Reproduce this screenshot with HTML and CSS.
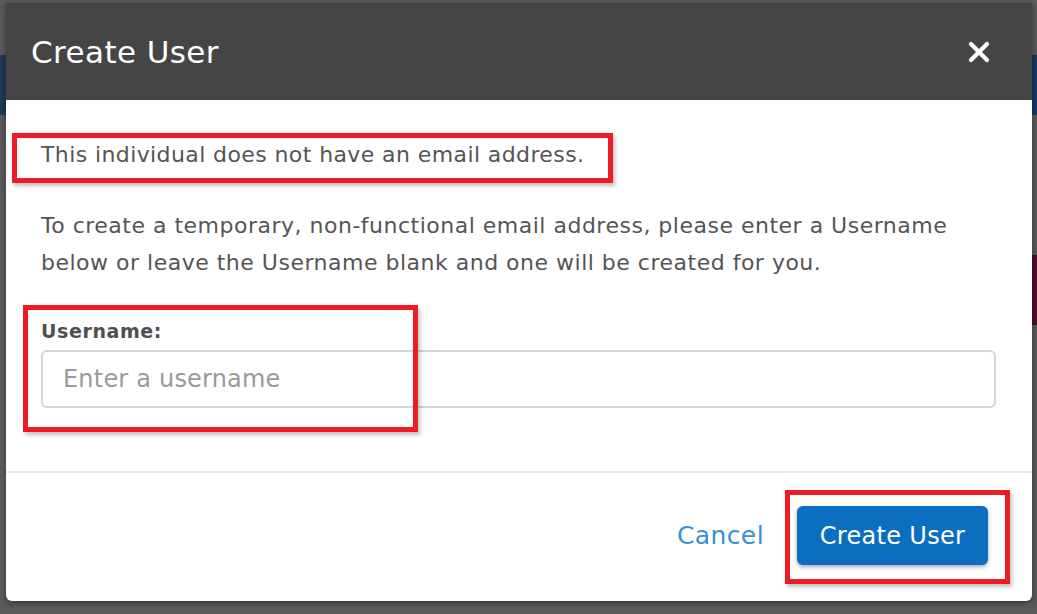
FILE: index.html
```html
<!DOCTYPE html>
<html lang="en">

<head>
  <meta charset="UTF-8">
  <meta name="viewport" content="width=device-width, initial-scale=1.0">
  <title>Create User</title>
  <link rel="stylesheet" href="styles.css">
</head>

<body>
  <!-- stukjes van de pagina achter de overlay -->
  <div class="behind">
    <div class="strip strip-left"></div>
    <div class="strip strip-right"></div>
    <div class="strip strip-wine"></div>
  </div>

  <div class="modal">
    <div class="modal-header">
      <h2 class="modal-title">Create User</h2>
      <button class="close" aria-label="Close">
        <svg width="22" height="22" viewBox="0 0 22 22">
          <path d="M3 3 L19 19 M19 3 L3 19" stroke="#fff" stroke-width="4.2" stroke-linecap="round" />
        </svg>
      </button>
    </div>

    <div class="modal-body">
      <p class="notice">This individual does not have an email address.</p>
      <p class="info">To create a temporary, non-functional email address, please enter a Username below or leave the Username blank and one will be created for you.</p>

      <div class="field">
        <label for="username">Username:</label>
        <input type="text" id="username" placeholder="Enter a username">
      </div>
    </div>

    <div class="modal-footer">
      <a href="#" class="cancel">Cancel</a>
      <button class="button-primary">Create User</button>
    </div>

    <!-- rode markeringen uit de handleiding -->
    <div class="mark mark-notice"></div>
    <div class="mark mark-field"></div>
    <div class="mark mark-submit"></div>
  </div>
</body>

</html>
```

FILE: styles.css
```css
/* Donkere overlay achter de popup */
body {
  margin: 0;
  padding: 3px 5px 13px 6px;
  background-color: #5a5a5a;
  font-family: "DejaVu Sans", Verdana, sans-serif;
  color: #555;
}

.behind {
  position: absolute;
  inset: 0;
  z-index: 0;
}

.strip {
  position: absolute;
  width: 8px;
}

.strip-left {
  left: 0;
  top: 55px;
  height: 60px;
  background-color: #1d3a5a;
}

.strip-right {
  right: 0;
  top: 55px;
  height: 60px;
  background-color: #143a62;
}

.strip-wine {
  right: 0;
  top: 255px;
  height: 70px;
  background-color: #4a0f2c;
}

/* De popup zelf */
.modal {
  position: relative;
  z-index: 1;
  background-color: white;
  border-radius: 0 0 6px 6px;
  box-shadow: 0 2px 6px rgba(0, 0, 0, 0.4);
  height: 598px;
  display: flex;
  flex-direction: column;
}

.modal-header {
  background-color: #454545;
  height: 97px;
  display: flex;
  align-items: center;
  justify-content: space-between;
  padding: 0 42px 0 25px;
}

.modal-title {
  margin: 0;
  color: white;
  font-size: 31px;
  font-weight: normal;
  letter-spacing: 0.4px;
}

.close {
  background: none;
  border: none;
  padding: 0;
  width: 22px;
  height: 22px;
  cursor: pointer;
}

.close svg {
  display: block;
}

.modal-body {
  padding: 39px 36px 0 35px;
  height: 332px;
  border-bottom: 2px solid #e8e8e8;
}

.notice {
  margin: 0;
  font-size: 22px;
  letter-spacing: 0.4px;
  line-height: 32px;
}

.info {
  margin: 36px 0 0;
  font-size: 22px;
  letter-spacing: 0.5px;
  line-height: 37px;
}

.field {
  margin-top: 38px;
  display: flex;
  flex-direction: column;
}

.field label {
  font-size: 19px;
  line-height: 24px;
  font-weight: bold;
  letter-spacing: 0.6px;
  color: #4f4f4f;
  margin-bottom: 7px;
}

.field input {
  height: 58px;
  box-sizing: border-box;
  border: 2px solid #d6d6d6;
  border-radius: 6px;
  padding: 0 20px;
  font-family: inherit;
  font-size: 24px;
  letter-spacing: 0.2px;
  color: #444;
}

.field input::placeholder {
  color: #9a9a9a;
}

.modal-footer {
  flex: 1;
  display: flex;
  align-items: center;
  justify-content: flex-end;
  gap: 33px;
  padding: 0 44px 3px 0;
}

.cancel {
  color: #3a8fd4;
  text-decoration: none;
  font-size: 25px;
  letter-spacing: 0.4px;
}

.button-primary {
  background-color: #0b6ec0;
  color: white;
  border: none;
  border-radius: 6px;
  width: 191px;
  height: 59px;
  font-family: inherit;
  font-size: 24px;
  letter-spacing: 0.3px;
  box-shadow: 0 2px 4px rgba(0, 0, 0, 0.35);
  cursor: pointer;
}

/* Rode kaders als annotatie */
.mark {
  position: absolute;
  border: 5px solid #ec1b24;
  box-shadow: 2px 3px 4px rgba(0, 0, 0, 0.25);
}

.mark-notice {
  left: 6px;
  top: 130px;
  width: 591px;
  height: 40px;
}

.mark-field {
  left: 17px;
  top: 302px;
  width: 385px;
  height: 117px;
}

.mark-submit {
  left: 779px;
  top: 487px;
  width: 215px;
  height: 84px;
}
```
